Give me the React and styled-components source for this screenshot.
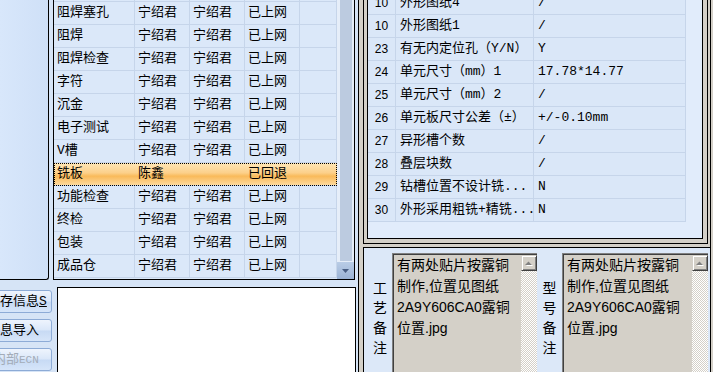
import React from 'react'
import styled, { createGlobalStyle } from 'styled-components'

const CJK = '"Noto Sans CJK SC", sans-serif'
const SIMSUN = '"Liberation Mono", "Noto Sans CJK SC", monospace'
const SANS = '"Liberation Sans", "Noto Sans CJK SC", sans-serif'

const GlobalStyle = createGlobalStyle`
  html, body {
    margin: 0;
    padding: 0;
    overflow: hidden;
  }
  body {
    font-family: ${CJK};
    background: #d6e4f6;
  }
`

const Screen = styled.div`
  display: flex;
  width: 713px;
  height: 372px;
  overflow: hidden;
  background: #d6e4f6;
`

/* ---------- left side ---------- */

const LeftCol = styled.div`
  flex: none;
  width: 359px;
  box-sizing: border-box;
  border-right: 1px solid #000;
  display: flex;
  flex-direction: column;
`

const TopRow = styled.div`
  flex: none;
  display: flex;
  height: 280px;
  gap: 4px;
`

const Sidebar = styled.div`
  width: 49px;
  height: 280px;
  box-sizing: border-box;
  border-right: 1px solid #000;
  border-bottom: 1px solid #000;
  border-bottom-right-radius: 3px;
  background: linear-gradient(to right, #d8e7fb, #cfe0f7);
`

const GridFrame = styled.div`
  display: flex;
  width: 302px;
  height: 280px;
  box-sizing: border-box;
  border: 1px solid #000;
  border-top: none;
  background: #dbe8f9;
  overflow: hidden;
`

const GridBody = styled.div`
  width: 283px;
  margin-top: -21px;
`

const Row = styled.div`
  display: grid;
  grid-template-columns: 81px 55px 55px 55px 37px;
  height: 23px;
  box-sizing: border-box;
  border-bottom: 1px solid #c6d5ea;
  background: ${p => p.$selected
    ? 'linear-gradient(#fee7b8, #fcd08a 45%, #f9ba5a 60%, #fdd99c)'
    : 'transparent'};
  outline: ${p => (p.$selected ? '1px dotted #000' : 'none')};
  outline-offset: -1px;
`

const Cell = styled.div`
  box-sizing: border-box;
  border-right: 1px solid ${p => (p.$selected ? 'transparent' : '#c6d5ea')};
  padding-left: 3px;
  font: 13px/22px ${SIMSUN};
  color: #000;
  white-space: nowrap;
  overflow: hidden;
`

const VScroll = styled.div`
  display: flex;
  flex-direction: column;
  width: 17px;
  background: #e6eef9;
`

const Thumb = styled.div`
  flex: 1;
  margin: 0 2px 1px 3px;
  background: #bccbe0;
`

const ScrollButton = styled.div`
  display: flex;
  align-items: center;
  justify-content: center;
  height: 17px;
  background: linear-gradient(#b9cce6, #9bb3d5);
`

const BottomRow = styled.div`
  display: flex;
  flex: 1;
  margin-top: 7px;
  gap: 5px;
  min-height: 0;
`

const SideButtons = styled.div`
  flex: none;
  width: 52px;
  overflow: hidden;
  display: flex;
  flex-direction: column;
  align-items: flex-end;
  gap: 6px;
  padding-top: 3px;
`

const ActionButton = styled.button`
  flex: none;
  width: 74px;
  height: 23px;
  box-sizing: border-box;
  border: 1px solid #8dabd6;
  border-radius: 3px;
  background: linear-gradient(#eef4fd, #dae7f9 48%, #c7daf4 52%, #d6e5f9);
  font: 13px/21px ${SIMSUN};
  text-align: left;
  padding: 0 0 0 ${p => (p.disabled ? 14 : 8)}px;
  color: ${p => (p.disabled ? '#a3acb8' : '#000')};
  white-space: nowrap;
`

const Small = styled.span`
  font-size: 11px;
`

const NoteArea = styled.div`
  width: 299px;
  box-sizing: border-box;
  border: 1px solid #000;
  border-bottom: none;
  background: #fff;
`

/* ---------- right side ---------- */

const RightCol = styled.div`
  flex: 1;
  display: flex;
  flex-direction: column;
  padding-left: 4px;
  background:
    linear-gradient(to left, transparent 2px, #000 2px, #000 3px, transparent 3px),
    #d4d0c8;
`

const TopFrame = styled.div`
  flex: none;
  display: flex;
  width: 345px;
  height: 244px;
  box-sizing: border-box;
  border: 1px solid #000;
  border-top: none;
  padding: 0 4px 4px 3px;
`

const DetailBox = styled.div`
  flex: 1;
  box-sizing: border-box;
  border: 1px solid #000;
  border-top: none;
  background: #e1ecfb;
  overflow: hidden;
`

const DetailBody = styled.div`
  width: 318px;
  margin-top: -8px;
`

const DetailRow = styled.div`
  display: grid;
  grid-template-columns: 28px 138px 152px;
  height: 23px;
  box-sizing: border-box;
  border-bottom: 1px solid #c6d5ea;
  background: #dae7f8;
`

const DetailCell = styled.div`
  box-sizing: border-box;
  border-right: 1px solid #c6d5ea;
  padding-left: ${p => (p.$num ? 0 : 4)}px;
  text-align: ${p => (p.$num ? 'center' : 'left')};
  font: ${p => (p.$num ? `12px/22px ${SANS}` : `13px/22px ${SIMSUN}`)};
  color: #000;
  white-space: nowrap;
  overflow: hidden;
`

const MemoFrame = styled.div`
  display: flex;
  align-items: flex-start;
  flex: 1;
  min-height: 0;
  width: 348px;
  margin-top: 3px;
  box-sizing: border-box;
  border: 1px solid #000;
  border-bottom: none;
  padding-top: 5px;
  background: #dce8f8;
  overflow: hidden;
`

const MemoLabel = styled.div`
  flex: none;
  width: ${p => p.$w}px;
  box-sizing: border-box;
  padding: 24px 0 0 ${p => p.$pad}px;
  display: flex;
  flex-direction: column;
  align-items: center;
  font: 14px/20px ${CJK};
  color: #000;
`

const MemoBox = styled.div`
  flex: none;
  display: flex;
  width: ${p => p.$w}px;
  height: 130px;
  box-sizing: border-box;
  border-top: 1px solid #808080;
  border-left: 1px solid #808080;
  box-shadow: inset 1px 1px 0 #404040;
  background: #d4d0c8;
`

const MemoText = styled.div`
  flex: 1;
  padding: 1px 5px 0 4px;
  font: 14px/21px ${SANS};
  color: #000;
`

const MemoScroll = styled.div`
  flex: none;
  width: 16px;
  margin-top: 1px;
  background: repeating-conic-gradient(#d4d0c8 0 25%, #ffffff 0 50%) 0 0 / 2px 2px;
`

const UpButton = styled.div`
  display: flex;
  align-items: center;
  justify-content: center;
  width: 16px;
  height: 16px;
  box-sizing: border-box;
  background: #d4d0c8;
  border-top: 1px solid #d4d0c8;
  border-left: 1px solid #d4d0c8;
  border-right: 1px solid #404040;
  border-bottom: 1px solid #404040;
  box-shadow: inset 1px 1px 0 #fff, inset -1px -1px 0 #808080;
`

const steps = [
  ['', '', '', ''],
  ['阻焊塞孔', '宁绍君', '宁绍君', '已上网'],
  ['阻焊', '宁绍君', '宁绍君', '已上网'],
  ['阻焊检查', '宁绍君', '宁绍君', '已上网'],
  ['字符', '宁绍君', '宁绍君', '已上网'],
  ['沉金', '宁绍君', '宁绍君', '已上网'],
  ['电子测试', '宁绍君', '宁绍君', '已上网'],
  ['V槽', '宁绍君', '宁绍君', '已上网'],
  ['铣板', '陈鑫', '', '已回退', true],
  ['功能检查', '宁绍君', '宁绍君', '已上网'],
  ['终检', '宁绍君', '宁绍君', '已上网'],
  ['包装', '宁绍君', '宁绍君', '已上网'],
  ['成品仓', '宁绍君', '宁绍君', '已上网'],
]

const details = [
  ['10', '外形图纸4', '/'],
  ['10', '外形图纸1', '/'],
  ['23', '有无内定位孔（Y/N）', 'Y'],
  ['24', '单元尺寸（mm）1', '17.78*14.77'],
  ['25', '单元尺寸（mm）2', '/'],
  ['26', '单元板尺寸公差（±）', '+/-0.10mm'],
  ['27', '异形槽个数', '/'],
  ['28', '叠层块数', '/'],
  ['29', '钻槽位置不设计铣...', 'N'],
  ['30', '外形采用粗铣+精铣...', 'N'],
]

const memoText = '有两处贴片按露铜制作,位置见图纸2A9Y606CA0露铜位置.jpg'

const Memo = ({ label, labelWidth, pad, width }) => (
  <>
    <MemoLabel $w={labelWidth} $pad={pad}>
      {label.split('').map((c, i) => <span key={i}>{c}</span>)}
    </MemoLabel>
    <MemoBox $w={width}>
      <MemoText>{memoText}</MemoText>
      <MemoScroll>
        <UpButton>
          <svg width="8" height="5" viewBox="0 0 8 5">
            <path d="M1 5 L4.5 1.5 L8 5 Z" fill="#fff" />
            <path d="M0 4 L3.5 0.5 L7 4 Z" fill="#808080" />
          </svg>
        </UpButton>
      </MemoScroll>
    </MemoBox>
  </>
)

const App = () => {
  return (
    <>
      <GlobalStyle />
      <Screen>
        <LeftCol>
          <TopRow>
            <Sidebar />
            <GridFrame>
              <GridBody>
                {steps.map((r, i) => (
                  <Row key={i} $selected={r[4]}>
                    {[0, 1, 2, 3].map(c => (
                      <Cell key={c} $selected={r[4]}>{r[c]}</Cell>
                    ))}
                    <Cell $selected={r[4]} />
                  </Row>
                ))}
              </GridBody>
              <VScroll>
                <Thumb />
                <ScrollButton>
                  <svg width="7" height="4" viewBox="0 0 7 4">
                    <path d="M0 0 L7 0 L3.5 4 Z" fill="#4a5f84" />
                  </svg>
                </ScrollButton>
              </VScroll>
            </GridFrame>
          </TopRow>
          <BottomRow>
            <SideButtons>
              <ActionButton>保存信息<u>S</u></ActionButton>
              <ActionButton>信息导入</ActionButton>
              <ActionButton disabled>内部<Small>ECN</Small></ActionButton>
            </SideButtons>
            <NoteArea />
          </BottomRow>
        </LeftCol>

        <RightCol>
          <TopFrame>
            <DetailBox>
              <DetailBody>
                {details.map((d, i) => (
                  <DetailRow key={i}>
                    <DetailCell $num>{d[0]}</DetailCell>
                    <DetailCell>{d[1]}</DetailCell>
                    <DetailCell>{d[2]}</DetailCell>
                  </DetailRow>
                ))}
              </DetailBody>
            </DetailBox>
          </TopFrame>
          <MemoFrame>
            <Memo label="工艺备注" labelWidth={28} pad={4} width={145} />
            <Memo label="型号备注" labelWidth={25} pad={0} width={146} />
          </MemoFrame>
        </RightCol>
      </Screen>
    </>
  )
}

export default App
